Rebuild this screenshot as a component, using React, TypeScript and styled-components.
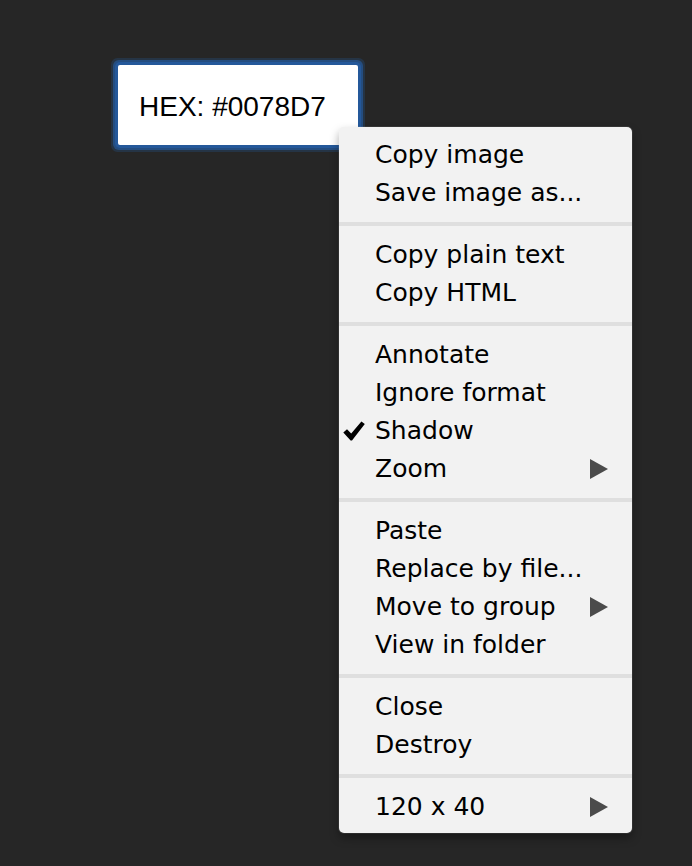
import React from "react";
import styled, { createGlobalStyle } from "styled-components";

const Global = createGlobalStyle`
  html, body {
    margin: 0;
    padding: 0;
    background: #262626;
  }
  body {
    min-height: 866px;
  }
`;

const Canvas = styled.div`
  position: relative;
  width: 692px;
  height: 866px;
  padding: 65px 0 0 118px;
  box-sizing: border-box;
  background: #262626;
`;

const ColorChip = styled.div`
  width: 240px;
  height: 80px;
  box-sizing: border-box;
  padding: 3px 0 0 21px;
  display: flex;
  align-items: center;
  background: #ffffff;
  border-radius: 2px;
  box-shadow:
    0 0 0 3px #24589a,
    0 0 0 5px rgba(36, 88, 154, 0.7),
    0 0 0 7px rgba(36, 80, 130, 0.35);
  font-family: "Liberation Sans", Arial, sans-serif;
  font-size: 28px;
  color: #000;
  white-space: nowrap;
`;

const Menu = styled.div`
  position: absolute;
  left: 339px;
  top: 127px;
  width: 293px;
  background: #f2f2f2;
  border-radius: 5px;
  box-shadow:
    0 0 0 1px rgba(255, 255, 255, 0.08),
    0 5px 10px rgba(0, 0, 0, 0.35);
  font-family: "DejaVu Sans", Verdana, sans-serif;
  font-size: 25px;
  color: #000;
  overflow: hidden;
`;

const Section = styled.div<{ $first?: boolean; $last?: boolean }>`
  padding: ${(p) => (p.$first ? 9 : 10)}px 0 ${(p) => (p.$last ? 7 : 10)}px;
  & + & {
    border-top: 4px solid #dfdfdf;
  }
`;

const Item = styled.div`
  display: flex;
  align-items: center;
  height: 38px;
  line-height: 38px;
  padding: 0 24px 0 4px;
  white-space: nowrap;
`;

const CheckSlot = styled.span`
  width: 32px;
  flex: 0 0 32px;
  display: flex;
  align-items: center;
`;

const Label = styled.span`
  flex: 1;
`;

const Arrow = styled.svg`
  width: 18px;
  height: 20px;
  display: block;
`;

// heavy check mark: thin upper-left stroke, thick long stroke to the right
const Check = () => (
  <svg width="22" height="20" viewBox="0 0 22 20">
    <path
      d="M0.3 11.4 L4 8.3 L8.2 12.6 L18.4 0.4 L21.8 3 L9 19.6 L7.6 19.6 Z"
      fill="#000"
    />
  </svg>
);

type Entry = { label: string; checked?: boolean; submenu?: boolean };

const sections: Entry[][] = [
  [{ label: "Copy image" }, { label: "Save image as..." }],
  [{ label: "Copy plain text" }, { label: "Copy HTML" }],
  [
    { label: "Annotate" },
    { label: "Ignore format" },
    { label: "Shadow", checked: true },
    { label: "Zoom", submenu: true },
  ],
  [
    { label: "Paste" },
    { label: "Replace by file..." },
    { label: "Move to group", submenu: true },
    { label: "View in folder" },
  ],
  [{ label: "Close" }, { label: "Destroy" }],
  [{ label: "120 x 40", submenu: true }],
];

export default function App() {
  return (
    <>
      <Global />
      <Canvas>
        <ColorChip>HEX: #0078D7</ColorChip>
        <Menu>
          {sections.map((group, i) => (
            <Section
              key={i}
              $first={i === 0}
              $last={i === sections.length - 1}
            >
              {group.map((entry) => (
                <Item key={entry.label}>
                  <CheckSlot>{entry.checked ? <Check /> : null}</CheckSlot>
                  <Label>{entry.label}</Label>
                  {entry.submenu ? (
                    <Arrow viewBox="0 0 18 20">
                      <polygon points="0,0 18,10 0,20" fill="#4b4b4b" />
                    </Arrow>
                  ) : null}
                </Item>
              ))}
            </Section>
          ))}
        </Menu>
      </Canvas>
    </>
  );
}
